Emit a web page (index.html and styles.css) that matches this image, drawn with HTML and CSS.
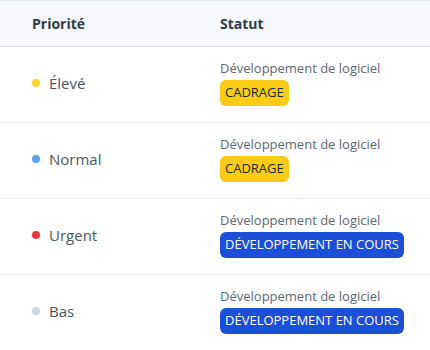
FILE: index.html
```html
<!DOCTYPE html>
<html lang="fr">
<head>
<meta charset="utf-8">
<link rel="stylesheet" href="styles.css">
</head>
<body>
<div class="table">
  <div class="row head">
    <div class="cell c1">Priorité</div>
    <div class="cell c2">Statut</div>
  </div>
  <div class="row">
    <div class="cell c1"><span class="dot yellow"></span><span class="prio">Élevé</span></div>
    <div class="cell c2"><div class="cat">Développement de logiciel</div><span class="badge b-yellow">CADRAGE</span></div>
  </div>
  <div class="row">
    <div class="cell c1"><span class="dot blue"></span><span class="prio">Normal</span></div>
    <div class="cell c2"><div class="cat">Développement de logiciel</div><span class="badge b-yellow">CADRAGE</span></div>
  </div>
  <div class="row">
    <div class="cell c1"><span class="dot red"></span><span class="prio">Urgent</span></div>
    <div class="cell c2"><div class="cat">Développement de logiciel</div><span class="badge b-blue">DÉVELOPPEMENT EN COURS</span></div>
  </div>
  <div class="row">
    <div class="cell c1"><span class="dot gray"></span><span class="prio">Bas</span></div>
    <div class="cell c2"><div class="cat">Développement de logiciel</div><span class="badge b-blue">DÉVELOPPEMENT EN COURS</span></div>
  </div>
</div>
</body>
</html>
```
FILE: styles.css
```css
* { box-sizing: border-box; }
html, body { margin: 0; padding: 0; background: #ffffff; }
body { font-family: "Open Sans", "Noto Sans", sans-serif; color: #374151; }
.table { width: 430px; border-top: 1px solid #e2e8f0; }
.row {
  display: grid;
  grid-template-columns: 188px 1fr;
  border-bottom: 1px solid #e5e7eb;
  height: 76px;
  align-items: center;
}
.row .cell { padding-bottom: 3px; }
.row.head { height: 46px; background: #f5f7fa; border-bottom: 1px solid #dde1e6; }
.head .cell { font-weight: 700; font-size: 14px; color: #333b48; padding-bottom: 1px; }
.c1 { padding-left: 32px; display: flex; align-items: center; }
.c2 { padding-left: 32px; }
.dot { width: 8px; height: 8px; border-radius: 50%; margin-right: 9px; }
.yellow { background: #fcd534; }
.blue { background: #5f9ff0; }
.red { background: #eb3b3b; }
.gray { background: #ccd5e0; }
.prio { font-size: 15px; color: #4b5563; }
.cat { font-size: 13px; color: #5f6672; line-height: 17px; margin-bottom: 3px; }
.badge {
  display: inline-block;
  font-size: 13px;
  line-height: 17px;
  padding: 4px 5px 5px;
  border-radius: 6px;
}
.b-yellow { background: #facc15; color: #1f2937; }
.b-blue { background: #1d4ed8; color: #ffffff; }
```
